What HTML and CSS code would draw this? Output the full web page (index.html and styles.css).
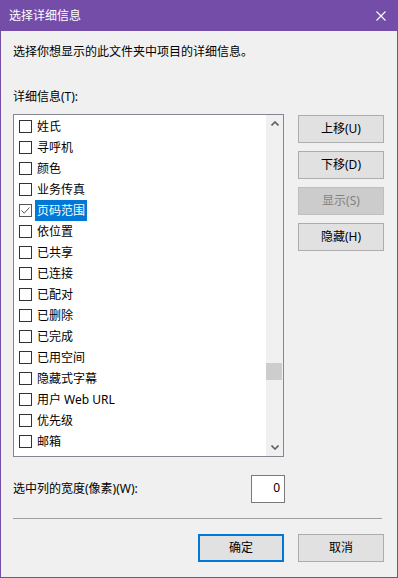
FILE: index.html
```html
<!DOCTYPE html>
<html lang="zh-CN">
<head>
    <meta charset="UTF-8">
    <title>选择详细信息</title>
    <link rel="stylesheet" href="styles.css">
</head>
<body>
    <div class="window">
        <div class="titlebar">
            <span class="title">选择详细信息</span>
            <svg class="close" width="10" height="10" viewBox="0 0 10 10">
                <path d="M0.5 0.5 L9.5 9.5 M9.5 0.5 L0.5 9.5" stroke="#ffffff" stroke-width="1.1" fill="none"/>
            </svg>
        </div>

        <div class="content">
            <p class="intro">选择你想显示的此文件夹中项目的详细信息。</p>
            <div class="field-label">详细信息(T):</div>

            <div class="main">
                <div class="listbox">
                    <ul class="items">
                        <li class="item"><span class="check"></span><span class="name">姓氏</span></li>
                        <li class="item"><span class="check"></span><span class="name">寻呼机</span></li>
                        <li class="item"><span class="check"></span><span class="name">颜色</span></li>
                        <li class="item"><span class="check"></span><span class="name">业务传真</span></li>
                        <li class="item selected">
                            <span class="check checked">
                                <svg width="11" height="11" viewBox="0 0 11 11"><path d="M1.5 5.5 L4.2 8.2 L9.5 2.5" stroke="#555" stroke-width="1" fill="none"/></svg>
                            </span>
                            <span class="name">页码范围</span>
                        </li>
                        <li class="item"><span class="check"></span><span class="name">依位置</span></li>
                        <li class="item"><span class="check"></span><span class="name">已共享</span></li>
                        <li class="item"><span class="check"></span><span class="name">已连接</span></li>
                        <li class="item"><span class="check"></span><span class="name">已配对</span></li>
                        <li class="item"><span class="check"></span><span class="name">已删除</span></li>
                        <li class="item"><span class="check"></span><span class="name">已完成</span></li>
                        <li class="item"><span class="check"></span><span class="name">已用空间</span></li>
                        <li class="item"><span class="check"></span><span class="name">隐藏式字幕</span></li>
                        <li class="item"><span class="check"></span><span class="name">用户 Web URL</span></li>
                        <li class="item"><span class="check"></span><span class="name">优先级</span></li>
                        <li class="item"><span class="check"></span><span class="name">邮箱</span></li>
                    </ul>
                    <div class="scrollbar">
                        <div class="arrow">
                            <svg width="8" height="5" viewBox="0 0 8 5"><path d="M0.5 4.5 L4 1 L7.5 4.5" stroke="#606060" stroke-width="1.6" fill="none"/></svg>
                        </div>
                        <div class="track"><div class="thumb"></div></div>
                        <div class="arrow">
                            <svg width="8" height="5" viewBox="0 0 8 5"><path d="M0.5 0.5 L4 4 L7.5 0.5" stroke="#606060" stroke-width="1.6" fill="none"/></svg>
                        </div>
                    </div>
                </div>

                <div class="side-buttons">
                    <button class="btn">上移(U)</button>
                    <button class="btn">下移(D)</button>
                    <button class="btn disabled">显示(S)</button>
                    <button class="btn">隐藏(H)</button>
                </div>
            </div>

            <div class="width-row">
                <span>选中列的宽度(像素)(W):</span>
                <div class="number-input">0</div>
            </div>

            <div class="separator"></div>

            <div class="footer">
                <button class="btn default">确定</button>
                <button class="btn">取消</button>
            </div>
        </div>
    </div>
</body>
</html>
```

FILE: styles.css
```css
:root {
    --accent: #744da9;
    --bg: #f0f0f0;
    --text: #000000;
    --button-bg: #e1e1e1;
    --button-border: #adadad;
    --select: #0078d7;
}

* {
    box-sizing: border-box;
    margin: 0;
    padding: 0;
}

body {
    font-family: "Noto Sans", "Noto Sans CJK SC", sans-serif;
    font-size: 12px;
    color: var(--text);
    background: var(--bg);
}

.window {
    width: 398px;
    height: 578px;
    border: 1px solid var(--accent);
    background: var(--bg);
    display: flex;
    flex-direction: column;
}

.titlebar {
    height: 30px;
    background: var(--accent);
    color: #ffffff;
    display: flex;
    align-items: center;
    justify-content: space-between;
    padding: 0 11px 0 8px;
}

.title {
    font-size: 12px;
    line-height: 16px;
}

.content {
    padding: 13px 13px 0 12px;
    display: flex;
    flex-direction: column;
}

.intro {
    line-height: 16px;
}

.field-label {
    line-height: 16px;
    margin-top: 29px;
}

.main {
    display: flex;
    gap: 14px;
    margin-top: 9px;
}

.listbox {
    width: 271px;
    height: 343px;
    border: 1px solid #828790;
    background: #ffffff;
    display: flex;
}

.items {
    list-style: none;
    flex: 1;
    padding-top: 1px;
}

.item {
    height: 21px;
    display: flex;
    align-items: center;
    padding-left: 5px;
}

.check {
    width: 13px;
    height: 13px;
    border: 1px solid #333333;
    background: #ffffff;
    display: flex;
    align-items: center;
    justify-content: center;
}

.check.checked {
    border-color: #555555;
}

.name {
    margin-left: 3px;
    padding: 0 2px;
    line-height: 21px;
    white-space: nowrap;
}

.item.selected .name {
    background: var(--select);
    color: #ffffff;
}

.scrollbar {
    width: 17px;
    background: #f0f0f0;
    display: flex;
    flex-direction: column;
}

.arrow {
    height: 17px;
    display: flex;
    align-items: center;
    justify-content: center;
}

.track {
    flex: 1;
}

.thumb {
    margin-top: 231px;
    width: 16px;
    height: 17px;
    background: #cdcdcd;
}

.side-buttons {
    display: flex;
    flex-direction: column;
    gap: 8px;
    padding-top: 1px;
}

.btn {
    width: 86px;
    height: 28px;
    border: 1px solid var(--button-border);
    background: var(--button-bg);
    font-family: inherit;
    font-size: 12px;
    color: var(--text);
    line-height: 16px;
}

.btn.disabled {
    background: #cccccc;
    border-color: #bfbfbf;
    color: #838383;
}

.btn.default {
    border: 2px solid var(--select);
}

.width-row {
    width: 272px;
    margin-top: 18px;
    display: flex;
    align-items: center;
    justify-content: space-between;
    line-height: 16px;
}

.number-input {
    width: 34px;
    height: 28px;
    border: 1px solid #7a7a7a;
    background: #ffffff;
    text-align: right;
    padding: 4px 4px 0 0;
}

.separator {
    width: 369px;
    height: 1px;
    background: #a0a0a0;
    margin-top: 15px;
}

.footer {
    margin-top: 15px;
    display: flex;
    justify-content: flex-end;
    gap: 14px;
}
```
